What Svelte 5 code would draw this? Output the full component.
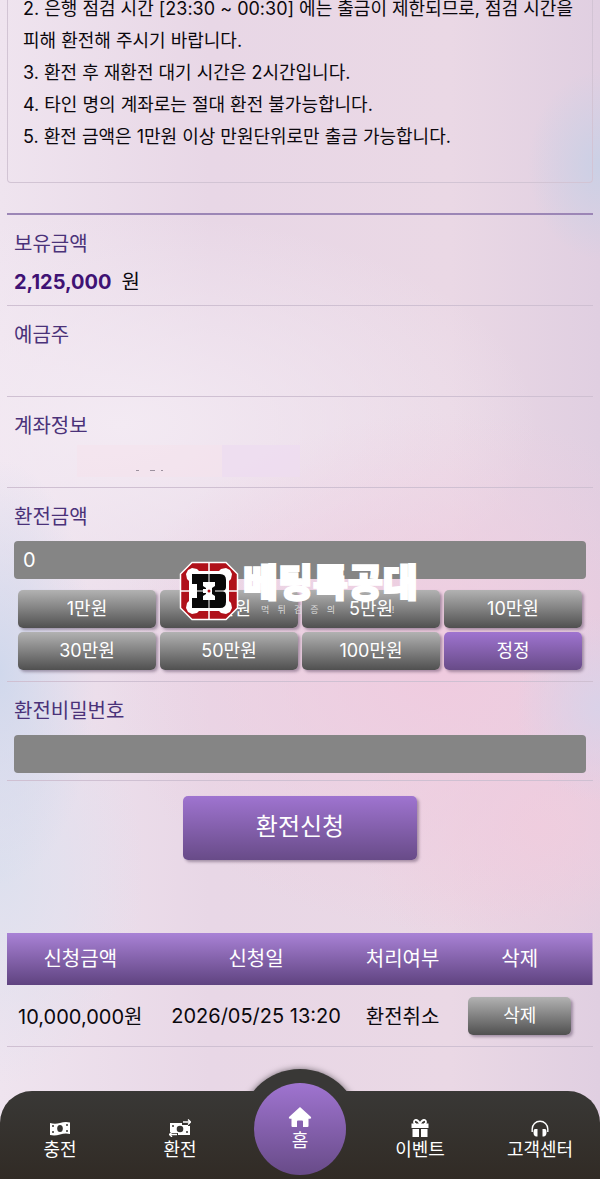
<script>
  let amount = $state(0);
  let password = $state('');

  const notices = [
    '2. 은행 점검 시간 [23:30 ~ 00:30] 에는 출금이 제한되므로, 점검 시간을 피해 환전해 주시기 바랍니다.',
    '3. 환전 후 재환전 대기 시간은 2시간입니다.',
    '4. 타인 명의 계좌로는 절대 환전 불가능합니다.',
    '5. 환전 금액은 1만원 이상 만원단위로만 출금 가능합니다.'
  ];

  const quickAmounts = [1, 3, 5, 10, 30, 50, 100];
  const tagline = [...'먹튀검증의   !'];

  let requests = $state([
    { id: 1, amount: '10,000,000원', date: '2026/05/25 13:20', status: '환전취소' }
  ]);

  function addAmount(value) {
    amount = Number(amount) + value * 10000;
  }

  function removeRequest(id) {
    requests = requests.filter((item) => item.id !== id);
  }
</script>

<div class="page">
  <main class="content">
    <section class="notice">
      {#each notices as line}
        <p>{line}</p>
      {/each}
    </section>

    <form class="form" onsubmit={(e) => e.preventDefault()}>
      <div class="row">
        <div class="label">보유금액</div>
        <div class="value"><strong>2,125,000</strong><span>원</span></div>
      </div>
      <div class="row">
        <div class="label">예금주</div>
        <div class="value"></div>
      </div>
      <div class="row">
        <div class="label">계좌정보</div>
        <div class="value">
          <svg viewBox="0 0 290 38" width="290" height="38" aria-hidden="true">
            <rect x="63" y="0" width="145" height="32" fill="#f6e1ec" opacity="0.5" />
            <rect x="208" y="0" width="78" height="32" fill="#eddcf0" opacity="0.8" />
            <path d="M122 25.500h3M136 25.500h5M147 25.500h2" stroke="#9d929f" stroke-width="1" />
          </svg>
        </div>
      </div>
      <div class="row">
        <label class="label" for="amount">환전금액</label>
        <div class="field-wrap">
          <input id="amount" class="field" type="text" inputmode="numeric" bind:value={amount} />
          <!-- Brand mark floating over the form -->
          <div class="brand">
            <svg class="brand-logo" viewBox="0 0 60 60" width="60" height="60" aria-hidden="true">
              <path d="M13 1.500h34L58.500 13v34L47 58.500H13L1.500 47V13z" fill="#b0111a" stroke="#fff" stroke-width="1.500" />
              <path
                d="M7 13l2-4 4-2 5 1 2 2h20l2-2 5-1 4 2 2 4-1 5-2 2v20l2 2 1 5-2 4-4 2-5-1-2-2H20l-2 2-5 1-4-2-2-4 1-5 2-2V20l-2-2z"
                fill="#fff"
              />
              <path d="M30 1v58M1 30h58" stroke="#fff" stroke-width="1.500" />
              <path
                d="M13 13h28q6 0 6 6v7q0 3-3 4 3 1 3 4v7q0 6-6 6H13V37h5V23h-5zM24 21h12v4l-3 2v6l3 2v4H24v-4l3-2v-1h-3v-4h3v-1l-3-2z"
                fill="#080808"
                fill-rule="evenodd"
              />
              <path d="M30 13v8M30 39v8M13 30h11M36 30h11" stroke="#fff" stroke-width="1" />
              <circle cx="30" cy="30" r="1.500" fill="#b0111a" />
            </svg>
            <div class="brand-text">
              <div class="brand-name">베팅특공대</div>
              <div class="brand-tag">
                {#each tagline as letter}<span>{letter}</span>{/each}
              </div>
            </div>
          </div>
        </div>
        <div class="quick">
          {#each quickAmounts as value}
            <button type="button" class="btn" onclick={() => addAmount(value)}>{value}만원</button>
          {/each}
          <button type="button" class="btn btn-purple" onclick={() => (amount = 0)}>정정</button>
        </div>
      </div>
      <div class="row row-password">
        <label class="label" for="password">환전비밀번호</label>
        <div class="field-wrap">
          <input id="password" class="field" type="password" bind:value={password} />
        </div>
      </div>
      <button type="submit" class="btn btn-purple submit">환전신청</button>
    </form>

    <table class="history">
      <thead>
        <tr>
          <th class="col-amount">신청금액</th>
          <th class="col-date">신청일</th>
          <th class="col-status">처리여부</th>
          <th class="col-delete">삭제</th>
        </tr>
      </thead>
      <tbody>
        {#each requests as item (item.id)}
          <tr>
            <td>{item.amount}</td>
            <td>{item.date}</td>
            <td>{item.status}</td>
            <td><button type="button" class="btn delete" onclick={() => removeRequest(item.id)}>삭제</button></td>
          </tr>
        {/each}
      </tbody>
    </table>
  </main>

  <nav class="tabbar">
    <a class="tab" href="#deposit">
      <svg viewBox="0 0 22 18" width="22" height="18" aria-hidden="true">
        <path d="M1 4q5 1.500 10 0t10-.500V15q-5-1-10 .500T1 16z" fill="#fff" />
        <ellipse cx="11" cy="9.500" rx="2.800" ry="3.600" fill="#373532" />
        <circle cx="4" cy="7" r="1" fill="#373532" />
        <circle cx="4" cy="13" r="1" fill="#373532" />
        <circle cx="18" cy="6" r="1" fill="#373532" />
        <circle cx="18" cy="12" r="1" fill="#373532" />
      </svg>
      <span>충전</span>
    </a>
    <a class="tab" href="#withdraw">
      <svg viewBox="0 0 22 18" width="22" height="18" aria-hidden="true">
        <path d="M1 4h12v2h6v1h2v9H9v-2H3v-1H1z" fill="#fff" />
        <circle cx="11" cy="10" r="3.300" fill="#373532" />
        <circle cx="4" cy="7" r="1" fill="#373532" />
        <circle cx="18" cy="13" r="1" fill="#373532" />
        <path d="M14 3h7M19 .5L21.500 3 19 5.500M8 15.500H1M3 13L.5 15.500 3 18" fill="none" stroke="#fff" stroke-width="1.300" />
      </svg>
      <span>환전</span>
    </a>
    <div class="home-slot">
      <a class="home" href="#home">
        <svg viewBox="0 0 24 22" width="24" height="22" aria-hidden="true">
          <path
            d="M12 1l11 10q.8 1.500-1 1.800h-1.500V20q0 1-1 1H15v-5.500q0-1-1-1h-4q-1 0-1 1V21H4.500q-1 0-1-1v-7.200H2q-1.800-.3-1-1.800z"
            fill="#fff"
          />
        </svg>
        <span>홈</span>
      </a>
    </div>
    <a class="tab" href="#event">
      <svg viewBox="0 0 22 18" width="22" height="18" aria-hidden="true">
        <path d="M2.500 4.500h17V9h-17zM3.500 10h6.500v8H3.500zM12 10h6.500v8H12z" fill="#fff" />
        <path d="M11 5C9 0 5 0 5 3c0 1.500 1 2 2 2M11 5c2-5 6-5 6-2 0 1.500-1 2-2 2" fill="none" stroke="#fff" stroke-width="1.800" />
      </svg>
      <span>이벤트</span>
    </a>
    <a class="tab" href="#support">
      <svg viewBox="0 0 22 18" width="22" height="18" aria-hidden="true">
        <path d="M3.200 13v-3a7.800 7.800 0 0 1 15.600 0v3" fill="none" stroke="#fff" stroke-width="1.400" />
        <path d="M6 10h2.500v7.500H7Q4.500 17 4.500 13.500T6 10zM16 10h-2.500v7.500H15q2.500-.5 2.500-4T16 10z" fill="#fff" />
      </svg>
      <span>고객센터</span>
    </a>
  </nav>
</div>

<style>
  :global(body) {
    font-family: Inter, 'Noto Sans CJK KR', sans-serif;
    background: #e9dae6;
  }

  .page {
    min-height: 100vh;
    display: flex;
    flex-direction: column;
    overflow: hidden;
    color: #0b080d;
    background:
      radial-gradient(ellipse 12% 8% at 100% 14%, #cbd0e5 0%, #cbd0e500 100%),
      radial-gradient(ellipse 16% 18% at 0% 57%, #d0d8ec 0%, #d0d8ec00 100%),
      radial-gradient(ellipse 14% 8% at 100% 60%, #dad2e8 0%, #dad2e800 100%),
      radial-gradient(ellipse 56% 22% at 74% 57%, #efcbdf 0%, #efcbdf00 100%),
      radial-gradient(ellipse 30% 14% at 90% 70%, #efcede 0%, #efcede00 100%),
      radial-gradient(ellipse 24% 18% at 0% 74%, #dde0ee 0%, #dde0ee00 100%),
      radial-gradient(ellipse 70% 18% at 20% 36%, #f3eaf3 0%, #f3eaf300 100%),
      linear-gradient(90deg, #efe4ef 0%, #e8d7e6 35%, #ead8e5 75%, #e0cfe1 100%);
  }

  .content {
    padding: 0 7px;
  }

  .notice {
    margin-top: -7px;
    margin-bottom: 30px;
    padding: 0 13px 29px 15px;
    border: 1px solid #d2c4d4;
    border-top: none;
    border-radius: 0 0 4px 4px;
    font-size: 18px;
    line-height: 32px;
  }

  .notice p {
    margin: 0;
  }

  .form {
    display: flex;
    flex-direction: column;
    border-top: 2px solid #9c86b6;
  }

  .row {
    padding: 10px 7px 4px;
    border-bottom: 1px solid #cfc0d2;
  }

  .label {
    display: block;
    height: 38px;
    line-height: 38px;
    font-size: 20px;
    color: #4a3279;
  }

  .value {
    display: flex;
    gap: 10px;
    height: 38px;
    line-height: 38px;
    font-size: 20px;
  }

  .value strong {
    color: #3f1274;
  }

  .field-wrap {
    position: relative;
    padding-top: 5px;
  }

  .field {
    display: block;
    box-sizing: border-box;
    width: 100%;
    height: 38px;
    padding: 0 9px;
    border: none;
    border-radius: 4px;
    background: #858585;
    color: #fff;
    font-family: inherit;
    font-size: 20px;
  }

  .quick {
    display: grid;
    grid-template-columns: repeat(4, 1fr);
    gap: 4px;
    padding: 11px 4px 7px;
  }

  .row-password {
    padding-bottom: 7px;
  }

  .btn {
    height: 38px;
    padding: 0 0 4px;
    border: none;
    border-radius: 5px;
    background: linear-gradient(#b2b2b2, #505050);
    box-shadow: 2px 2px 3px rgba(60, 40, 70, 0.4);
    color: #fff;
    font-family: inherit;
    font-size: 18px;
    cursor: pointer;
  }

  .btn-purple {
    background: linear-gradient(#9f74d0, #684b88);
  }

  .submit {
    align-self: center;
    width: 40%;
    height: 64px;
    margin-top: 15px;
    padding-bottom: 8px;
    font-size: 24px;
  }

  .brand {
    position: absolute;
    top: 25px;
    left: 50%;
    transform: translateX(-50%);
    display: flex;
    gap: 4px;
    width: 242px;
    pointer-events: none;
    color: #fff;
  }

  .brand-logo {
    flex-shrink: 0;
  }

  .brand-name {
    height: 42px;
    line-height: 42px;
    font-size: 38px;
    font-weight: 900;
    white-space: nowrap;
    -webkit-text-stroke: 2px #fff;
  }

  .brand-tag {
    display: flex;
    justify-content: space-between;
    padding: 0 18px;
    font-size: 9px;
    line-height: 14px;
    color: #dddddd;
  }

  .brand-tag span {
    min-width: 8px;
  }

  .history {
    width: 100%;
    margin: 73px 0 20px;
    table-layout: fixed;
    border-collapse: collapse;
    font-size: 20px;
    text-align: center;
    white-space: nowrap;
  }

  .history thead {
    background: linear-gradient(#a982d6, #5f4380);
    color: #fff;
  }

  .history th {
    height: 48px;
    padding: 0 0 4px;
    font-weight: 400;
  }

  .history td {
    height: 61px;
    padding: 0;
    border-bottom: 1px solid #cfc0d2;
  }

  .col-amount,
  .col-delete {
    width: 25%;
  }

  .col-date {
    width: 35%;
  }

  .col-status {
    width: 15%;
  }

  .delete {
    width: 70%;
  }

  .tabbar {
    position: relative;
    z-index: 0;
    display: grid;
    grid-template-columns: repeat(5, 1fr);
    height: 88px;
    margin-top: auto;
    font-size: 18px;
    line-height: 22px;
  }

  /* Bar surface, drawn over the lower half of the ring */
  .tabbar::after {
    content: '';
    position: absolute;
    inset: 0;
    z-index: -1;
    border-radius: 32px 32px 0 0;
    background: linear-gradient(#393836, #312b25);
  }

  .tabbar::before {
    content: '';
    position: absolute;
    top: -22px;
    left: 50%;
    z-index: -2;
    width: 120px;
    height: 120px;
    border-radius: 50%;
    background: #393836;
    box-shadow: 0 0 6px rgba(0, 0, 0, 0.5);
    transform: translateX(-50%);
  }

  .tab {
    display: flex;
    flex-direction: column;
    align-items: center;
    gap: 2px;
    padding-top: 28px;
    color: #fff;
    text-decoration: none;
  }

  .home-slot {
    display: flex;
    flex-direction: column;
    align-items: center;
  }

  .home {
    display: flex;
    flex-direction: column;
    align-items: center;
    gap: 2px;
    box-sizing: border-box;
    width: 92px;
    height: 92px;
    margin-top: -8px;
    padding-top: 23px;
    border-radius: 50%;
    background: linear-gradient(#9f74d0, #684b88);
    color: #fff;
    text-decoration: none;
  }
</style>
